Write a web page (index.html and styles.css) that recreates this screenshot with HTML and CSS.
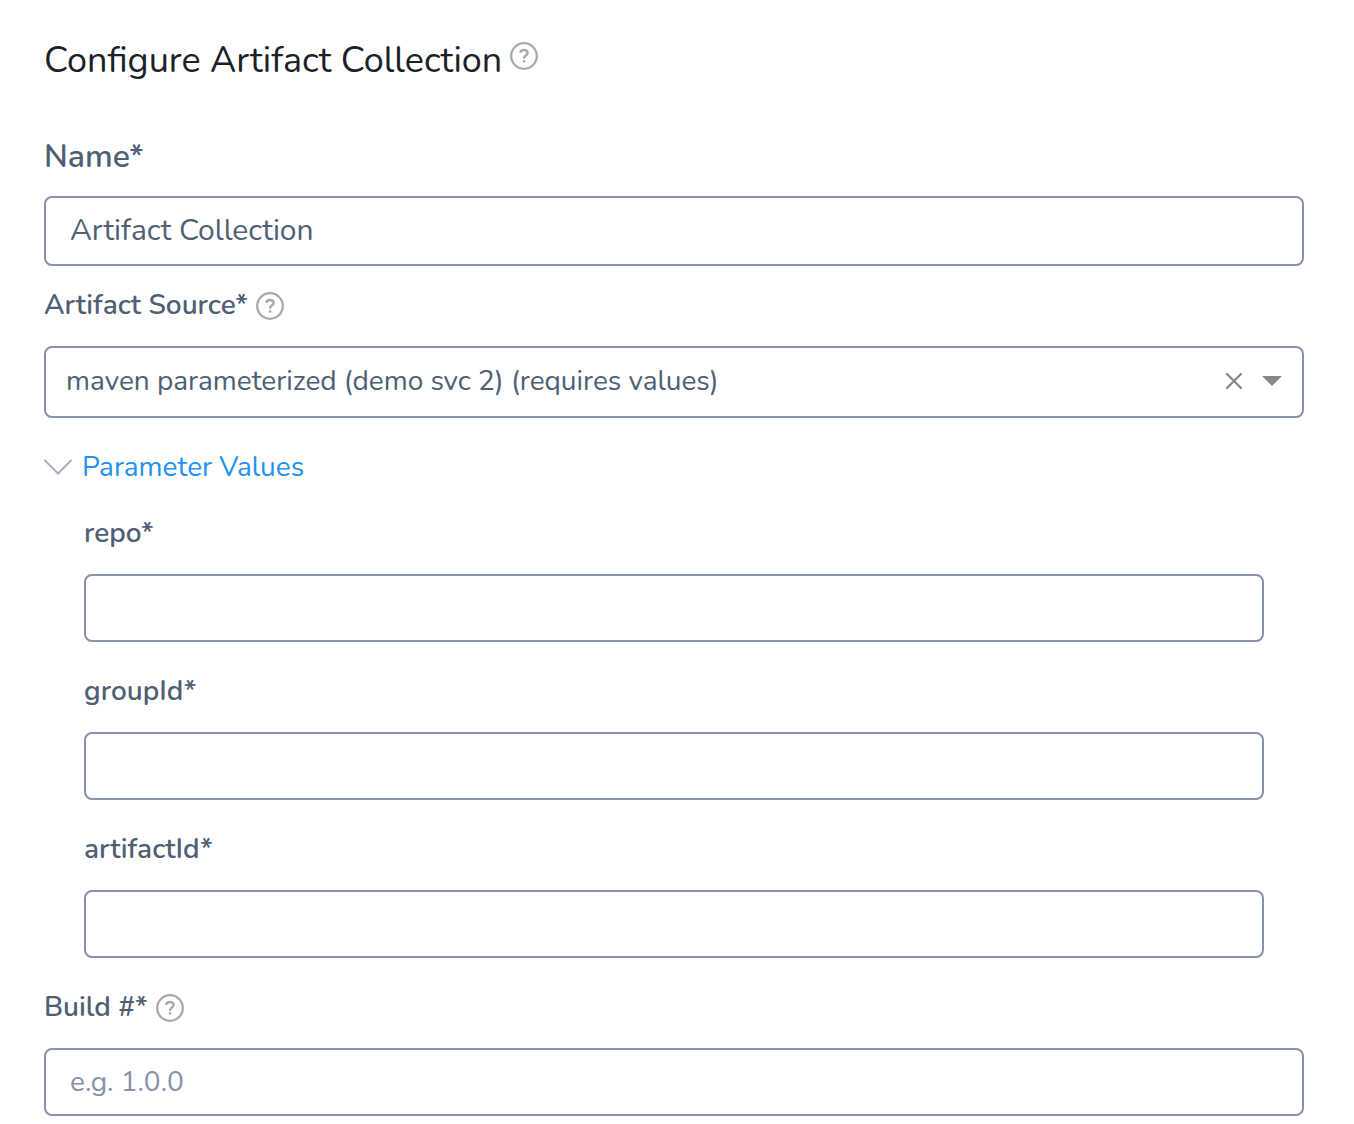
FILE: index.html
```html
<!DOCTYPE html>
<html lang="en">
<head>
<meta charset="utf-8">
<meta name="viewport" content="width=device-width, initial-scale=1">
<title>Configure Artifact Collection</title>
<link rel="stylesheet" href="styles.css">
</head>
<body>
<svg class="sprite" aria-hidden="true">
  <symbol id="help" viewBox="0 0 28 28">
    <circle cx="14" cy="14" r="12.8" fill="none" stroke="currentColor" stroke-width="2.3"/>
    <path d="M10.2 10.9C10.5 8.9 12 8 13.9 8c2.2 0 3.7 1.1 3.7 2.9 0 2.5-3.5 2.8-3.5 5.2v.6" fill="none" stroke="currentColor" stroke-width="2.4"/>
    <path d="M12.8 18.2h2.5v2.3h-2.5z" fill="currentColor"/>
  </symbol>
</svg>
<form class="form">
  <div class="heading">
    <h1 class="title">Configure Artifact Collection</h1>
    <button class="help" type="button" aria-label="Help"><svg class="help-icon"><use href="#help"/></svg></button>
  </div>

  <div class="label-row label-row-name"><label class="label label-large" for="name">Name*</label></div>
  <input class="input input-name" id="name" type="text" value="Artifact Collection">

  <div class="label-row label-row-source">
    <label class="label" for="source">Artifact Source*</label>
    <button class="help" type="button" aria-label="Artifact source help"><svg class="help-icon"><use href="#help"/></svg></button>
  </div>
  <div class="picker">
    <select class="select" id="source">
      <option>maven parameterized (demo svc 2) (requires values)</option>
    </select>
    <button class="clear" type="button" aria-label="Clear"><svg class="clear-icon" viewBox="0 0 18 18"><path d="M2 2l14 14M16 2l-14 14" fill="none" stroke="currentColor" stroke-width="2.2" stroke-linecap="round"/></svg></button>
    <svg class="arrow" viewBox="0 0 20 10" aria-hidden="true"><path d="M0 0h20L10 10z" fill="currentColor"/></svg>
  </div>

  <button class="toggle" type="button" aria-expanded="true" aria-controls="parameters">
    <svg class="chevron" viewBox="0 0 28 16" aria-hidden="true"><path d="M1 1.5l13 13 13-13" fill="none" stroke="currentColor" stroke-width="2" stroke-linecap="round"/></svg>
    Parameter Values
  </button>
  <div class="parameters" id="parameters">
    <div class="field">
      <label class="label" for="repo">repo*</label>
      <input class="input" id="repo" type="text">
    </div>
    <div class="field">
      <label class="label" for="group">groupId*</label>
      <input class="input" id="group" type="text">
    </div>
    <div class="field">
      <label class="label" for="artifact">artifactId*</label>
      <input class="input" id="artifact" type="text">
    </div>
  </div>

  <div class="label-row label-row-build">
    <label class="label" for="build">Build #*</label>
    <button class="help" type="button" aria-label="Build number help"><svg class="help-icon"><use href="#help"/></svg></button>
  </div>
  <input class="input" id="build" type="text" placeholder="e.g. 1.0.0">
</form>
</body>
</html>
```
FILE: styles.css
```css
* {
  box-sizing: border-box;
}

body {
  margin: 0;
  background: #fff;
  color: #4f6074;
  font-family: Nunito, Lato, "Liberation Sans", sans-serif;
  font-size: 28px;
  line-height: 38px;
}

button,
input,
select {
  font: inherit;
  color: inherit;
}

button {
  display: flex;
  padding: 0;
  border: 0;
  background: none;
  cursor: pointer;
}

.sprite {
  display: none;
}

.form {
  padding: 36px 50px 8px 44px;
}

.heading {
  display: flex;
  gap: 8px;
}

.title {
  margin: 0;
  color: #1c2128;
  font-size: 36px;
  font-weight: 400;
  line-height: 50px;
}

.help {
  margin-top: 6px;
  color: #a9a9ab;
}

.help-icon {
  width: 28px;
  height: 28px;
}

.label-row {
  display: flex;
  align-items: flex-start;
  gap: 8px;
  height: 38px;
  margin-bottom: 22px;
}

.label-row-name {
  margin-top: 52px;
  margin-bottom: 20px;
}

.label-row-source {
  margin-top: 20px;
}

.label-row-build {
  margin-top: 30px;
}

.label {
  font-weight: 600;
}

.label-large {
  font-size: 32px;
}

.input,
.picker {
  width: 100%;
  border: 2px solid #8791a8;
  border-radius: 8px;
  background: #fff;
}

.input {
  display: block;
  height: 68px;
  padding: 0 24px;
}

.input::placeholder {
  color: #8791a8;
  opacity: 1;
}

.input-name {
  height: 70px;
  padding-bottom: 2px;
  font-size: 30px;
}

.picker {
  display: grid;
  grid-template-columns: 1fr 18px 20px;
  column-gap: 19px;
  align-items: center;
  height: 72px;
  padding-right: 20px;
  padding-bottom: 2px;
}

.select {
  grid-area: 1 / 1 / 2 / -1;
  width: 100%;
  height: 66px;
  padding: 0 78px 0 20px;
  border: 0;
  background: none;
  appearance: none;
}

.clear,
.arrow {
  grid-row: 1;
  color: #868686;
}

.clear {
  grid-column: 2;
}

.clear-icon {
  width: 18px;
  height: 18px;
}

.arrow {
  grid-column: 3;
  width: 20px;
  height: 10px;
  pointer-events: none;
}

.toggle {
  align-items: center;
  gap: 10px;
  margin-top: 30px;
  color: #2391f0;
}

.chevron {
  width: 28px;
  height: 16px;
  color: #a9b0bf;
}

.parameters {
  display: grid;
  gap: 30px;
  margin-top: 28px;
  padding: 0 40px;
}

.field {
  display: grid;
  gap: 22px;
}
```
